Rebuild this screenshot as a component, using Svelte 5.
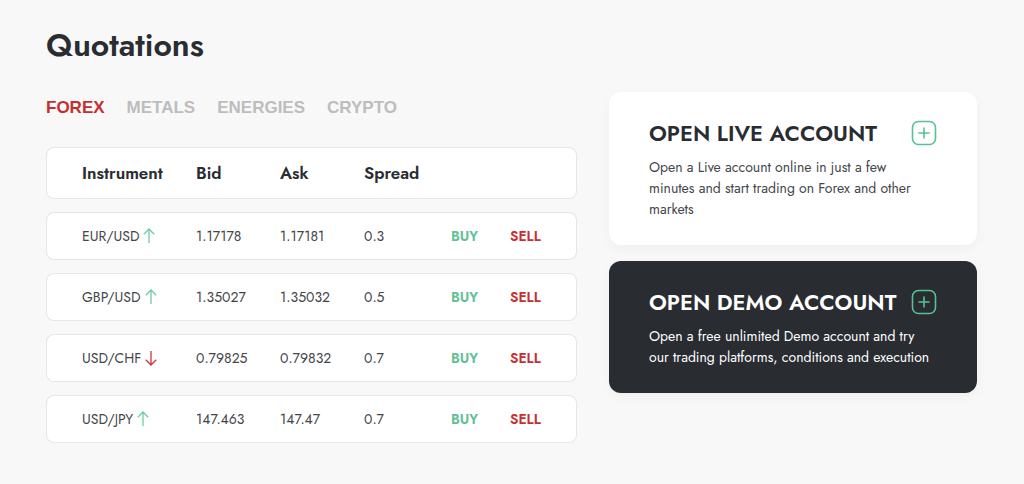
<script lang="ts">
	type Quote = {
		instrument: string;
		up: boolean;
		bid: string;
		ask: string;
		spread: string;
	};

	const tabs = ['Forex', 'Metals', 'Energies', 'Crypto'];
	let activeTab = $state('Forex');

	const quotes: Quote[] = [
		{ instrument: 'EUR/USD', up: true, bid: '1.17178', ask: '1.17181', spread: '0.3' },
		{ instrument: 'GBP/USD', up: true, bid: '1.35027', ask: '1.35032', spread: '0.5' },
		{ instrument: 'USD/CHF', up: false, bid: '0.79825', ask: '0.79832', spread: '0.7' },
		{ instrument: 'USD/JPY', up: true, bid: '147.463', ask: '147.47', spread: '0.7' }
	];

	const accounts = [
		{
			title: 'Open live account',
			text: 'Open a Live account online in just a few minutes and start trading on Forex and other markets',
			dark: false
		},
		{
			title: 'Open demo account',
			text: 'Open a free unlimited Demo account and try our trading platforms, conditions and execution',
			dark: true
		}
	];
</script>

<section class="quotations">
	<h2>Quotations</h2>

	<div class="columns">
		<div class="market">
			<div class="tabs" role="tablist">
				{#each tabs as tab}
					<button
						role="tab"
						aria-selected={activeTab === tab}
						class:active={activeTab === tab}
						onclick={() => (activeTab = tab)}
					>
						{tab}
					</button>
				{/each}
			</div>

			<table>
				<thead>
					<tr>
						<th class="col-instrument">Instrument</th>
						<th class="col-price">Bid</th>
						<th class="col-price">Ask</th>
						<th class="col-spread">Spread</th>
						<th class="col-buy" aria-label="Buy"></th>
						<th class="col-sell" aria-label="Sell"></th>
					</tr>
				</thead>
				<tbody>
					{#each quotes as quote}
						<tr>
							<td>
								<span class="instrument">
									{quote.instrument}
									<svg class="arrow" class:down={!quote.up} viewBox="0 0 12 16" width="12" height="16" aria-hidden="true">
										<path d="M6 15V1M0.8 6.2L6 1l5.2 5.2" />
									</svg>
								</span>
							</td>
							<td>{quote.bid}</td>
							<td>{quote.ask}</td>
							<td>{quote.spread}</td>
							<td><a class="buy" href="#buy">BUY</a></td>
							<td><a class="sell" href="#sell">SELL</a></td>
						</tr>
					{/each}
				</tbody>
			</table>
		</div>

		<div class="accounts">
			{#each accounts as account}
				<a class="card" class:dark={account.dark} href="#account">
					<div class="card-head">
						<h3>{account.title}</h3>
						<svg class="plus" viewBox="0 0 26 26" width="26" height="26" aria-hidden="true">
							<rect x="1.5" y="1.5" width="23" height="23" rx="6" />
							<path d="M13 8v10M8 13h10" />
						</svg>
					</div>
					<p>{account.text}</p>
				</a>
			{/each}
		</div>
	</div>
</section>

<style>
	:global(body) {
		margin: 0;
		background: #f8f8f8;
	}

	.quotations {
		padding: 24px 47px 29px 46px;
		color: #292c31;
		font-family: Jost, Lato, sans-serif;
	}

	h2 {
		margin: 0;
		font-size: 32px;
		line-height: 42px;
		font-weight: 600;
	}

	.columns {
		display: grid;
		grid-template-columns: 531fr 368fr;
		align-items: start;
		gap: 32px;
		margin-top: 26px;
	}

	.tabs {
		display: flex;
		gap: 22px;
		padding-top: 6px;
		margin-bottom: 16px;
	}

	.tabs button {
		padding: 0;
		border: none;
		background: none;
		color: #bcbdbe;
		font: 700 17px/20px 'Liberation Sans', Arial, sans-serif;
		text-transform: uppercase;
		cursor: pointer;
	}

	.tabs button.active {
		color: #c62f31;
	}

	/* Each row is drawn as its own rounded box */
	table {
		width: 100%;
		table-layout: fixed;
		border-collapse: separate;
		border-spacing: 0 13px;
	}

	th,
	td {
		box-sizing: border-box;
		height: 48px;
		padding: 0;
		border: solid #e6e6e6;
		border-width: 1px 0;
		background: #fff;
		text-align: left;
		white-space: nowrap;
	}

	th {
		height: 52px;
		font-size: 17px;
		font-weight: 600;
	}

	td {
		color: #43464a;
		font-size: 14px;
	}

	th:first-child,
	td:first-child {
		padding-left: 35px;
		border-left-width: 1px;
		border-radius: 8px 0 0 8px;
	}

	th:last-child,
	td:last-child {
		border-right-width: 1px;
		border-radius: 0 8px 8px 0;
	}

	.col-instrument {
		width: 150px;
	}

	.col-price {
		width: 84px;
	}

	.col-spread {
		width: 87px;
	}

	.col-buy {
		width: 59px;
	}

	.col-sell {
		width: 67px;
	}

	.instrument {
		display: flex;
		align-items: center;
		gap: 4px;
	}

	.arrow {
		fill: none;
		stroke: #6fcda3;
		stroke-width: 1.3;
	}

	.arrow.down {
		stroke: #d0343c;
		transform: rotate(180deg);
	}

	.buy,
	.sell {
		font-weight: 600;
		text-decoration: none;
	}

	.buy {
		color: #62bf94;
	}

	.sell {
		color: #c62f31;
	}

	.accounts {
		display: flex;
		flex-direction: column;
		gap: 16px;
	}

	.card {
		padding: 26px 40px 25px;
		border-radius: 12px;
		background: #fff;
		box-shadow: 0 4px 12px rgba(0, 0, 0, 0.04);
		color: #43464a;
		text-decoration: none;
	}

	.card-head {
		display: flex;
		align-items: center;
		justify-content: space-between;
	}

	h3 {
		margin: 0;
		color: #292c31;
		font-size: 22px;
		line-height: 30px;
		font-weight: 600;
		text-transform: uppercase;
		white-space: nowrap;
	}

	.card p {
		margin: 9px 0 0;
		padding-right: 4px;
		font-size: 14px;
		line-height: 21px;
	}

	.card.dark {
		background: #292c31;
		color: #fff;
	}

	.dark h3 {
		color: #fff;
	}

	.plus {
		flex: none;
		fill: none;
		stroke: #56c192;
		stroke-width: 1.6;
		stroke-linecap: round;
	}
</style>
